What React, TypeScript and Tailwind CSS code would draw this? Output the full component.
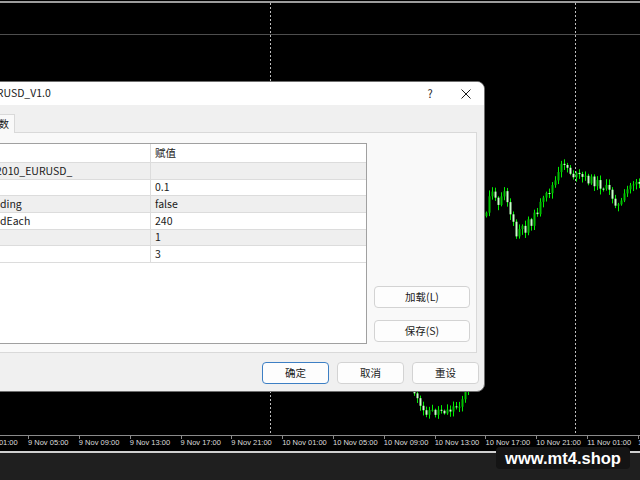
import React from 'react';

type Pt = [number, number];

// rough shape of the price line, in chart pixels (y grows downward)
const PRICE_PATH: Pt[] = [
  [414, 392], [418, 405], [422, 412], [428, 410], [434, 413], [440, 409], [446, 411],
  [452, 408], [458, 405], [462, 398], [466, 392], [470, 378], [476, 300], [483, 220],
  [486, 212], [489, 198], [492, 190], [496, 205], [500, 196], [504, 188], [508, 205],
  [512, 222], [516, 236], [520, 228], [524, 232], [528, 220], [532, 222], [536, 212],
  [540, 205], [544, 200], [548, 192], [552, 186], [556, 180], [560, 170], [563, 160],
  [566, 166], [570, 172], [574, 176], [580, 177], [586, 179], [592, 181], [598, 184],
  [604, 187], [610, 193], [614, 200], [618, 206], [622, 202], [626, 192], [630, 186],
  [635, 180], [641, 184],
];

function priceAt(x: number): number {
  for (let i = 0; i < PRICE_PATH.length - 1; i++) {
    const [x0, y0] = PRICE_PATH[i];
    const [x1, y1] = PRICE_PATH[i + 1];
    if (x >= x0 && x <= x1) return y0 + ((y1 - y0) * (x - x0)) / (x1 - x0);
  }
  return PRICE_PATH[PRICE_PATH.length - 1][1];
}

type Candle = { x: number; open: number; close: number; high: number; low: number };

function buildCandles(): Candle[] {
  let seed = 11;
  const rnd = () => {
    seed = (seed * 9301 + 49297) % 233280;
    return seed / 233280;
  };
  const out: Candle[] = [];
  let prev = priceAt(414);
  for (let x = 414; x <= 641; x += 3) {
    const close = priceAt(x) + (rnd() - 0.5) * 9;
    const open = prev;
    const high = Math.min(open, close) - 1 - rnd() * 5;
    const low = Math.max(open, close) + 1 + rnd() * 5;
    out.push({ x, open, close, high, low });
    prev = close;
  }
  return out;
}

const CANDLES = buildCandles();

const TIME_LABELS = [
  '9 Nov 01:00', '9 Nov 05:00', '9 Nov 09:00', '9 Nov 13:00', '9 Nov 17:00', '9 Nov 21:00',
  '10 Nov 01:00', '10 Nov 05:00', '10 Nov 09:00', '10 Nov 13:00', '10 Nov 17:00', '10 Nov 21:00',
  '11 Nov 01:00', '11 Nov 05:00',
];

const ROWS = [
  { name: '2010_EURUSD_', value: '', gray: true, cut: true },
  { name: '', value: '0.1', gray: false },
  { name: 'ding', value: 'false', gray: true },
  { name: 'dEach', value: '240', gray: false },
  { name: '', value: '1', gray: true },
  { name: '', value: '3', gray: false },
];

function ChartCanvas() {
  return (
    <svg className="absolute inset-0" width={640} height={435} viewBox="0 0 640 435">
      <line x1={270.5} y1={3} x2={270.5} y2={435} stroke="#bdbdbd" strokeDasharray="2 2" />
      <line x1={575.5} y1={3} x2={575.5} y2={435} stroke="#bdbdbd" strokeDasharray="2 2" />
      {CANDLES.map((c) => {
        const top = Math.min(c.open, c.close);
        const h = Math.max(1, Math.abs(c.close - c.open));
        const bull = c.close < c.open;
        return (
          <g key={c.x}>
            <line x1={c.x + 0.5} x2={c.x + 0.5} y1={c.high} y2={c.low} stroke="#00f000" />
            <rect x={c.x - 0.5} y={top} width={2} height={h} fill={bull ? '#00c000' : '#c8ffc8'} />
          </g>
        );
      })}
    </svg>
  );
}

function WinButton({ label, wide, primary }: { label: string; wide?: boolean; primary?: boolean }) {
  return (
    <button
      type="button"
      className={`flex h-[22px] items-center justify-center rounded-[4px] border bg-[#fdfdfd] text-[10.5px] leading-none text-[#1b1b1b] ${
        wide ? 'w-[96px]' : 'w-[67px]'
      } ${primary ? 'border-[#3d7fc4]' : 'border-[#d3d3d3]'}`}
    >
      {label}
    </button>
  );
}

function ParamsDialog() {
  return (
    <div className="absolute left-[-12px] top-[81px] flex h-[311px] w-[497px] flex-col overflow-hidden rounded-lg border border-[#6e6e6e] bg-[#f0f0f0] font-['Noto_Sans_CJK_SC',sans-serif] text-[10.5px] text-[#1a1a1a]">
      {/* title bar */}
      <div className="flex h-[23px] shrink-0 items-center bg-white">
        <span className="-ml-[6px] leading-none">EURUSD_V1.0</span>
        <div className="ml-auto flex h-full">
          <span className="flex w-[36px] items-center justify-center text-[11px] leading-none">?</span>
          <span className="flex w-[36px] items-center justify-center">
            <svg width="10" height="10" viewBox="0 0 10 10">
              <path d="M0.5 0.5 9.5 9.5M9.5 0.5 0.5 9.5" stroke="#1a1a1a" strokeWidth="1" />
            </svg>
          </span>
        </div>
      </div>

      {/* tab strip */}
      <div className="flex h-[27px] shrink-0 items-end pt-[8px]">
        <div className="relative z-10 -mb-px -ml-[7px] h-[19px] border border-b-0 border-[#d9d9d9] bg-[#f9f9f9] px-[5px] leading-[18px]">
          参数
        </div>
      </div>

      {/* tab panel */}
      <div className="mr-[7px] flex min-h-0 flex-1 gap-[7px] border border-[#d9d9d9] bg-[#f9f9f9] pb-[8px] pl-[4px] pr-[6px] pt-[10px]">
        <div className="flex flex-1 flex-col border border-[#a0a0a0] bg-white">
          <div className="flex h-[19px] shrink-0 border-b border-[#dcdcdc]">
            <div className="w-[156px] shrink-0 border-r border-[#dcdcdc]" />
            <div className="flex flex-1 items-center pl-[4px] leading-none">赋值</div>
          </div>
          {ROWS.map((r, i) => (
            <div
              key={i}
              className={`flex h-[16.67px] shrink-0 border-b border-[#dcdcdc] leading-none ${r.gray ? 'bg-[#efefef]' : 'bg-white'}`}
            >
              <div className="flex w-[156px] shrink-0 items-center overflow-hidden border-r border-[#dcdcdc] pl-[5px]">
                <span className={r.cut ? '-ml-[4px] whitespace-nowrap' : 'whitespace-nowrap'}>{r.name}</span>
              </div>
              <div className="flex flex-1 items-center pl-[4px]">{r.value}</div>
            </div>
          ))}
        </div>
        <div className="flex flex-col justify-end gap-[12px] pb-[2px]">
          <WinButton label="加载(L)" wide />
          <WinButton label="保存(S)" wide />
        </div>
      </div>

      {/* dialog buttons */}
      <div className="flex h-[38px] shrink-0 justify-end gap-[8px] pr-[5px] pt-[9px]">
        <WinButton label="确定" primary />
        <WinButton label="取消" />
        <WinButton label="重设" />
      </div>
    </div>
  );
}

export default function App() {
  return (
    <div className="relative h-[480px] w-[640px] overflow-hidden bg-black font-['Liberation_Sans',sans-serif]">
      <div className="flex h-full flex-col">
        <div className="relative h-[435px] shrink-0">
          <div className="mt-px h-[2px] bg-[#9c9c9c]" />
          <div className="mt-[31px] h-px bg-[#4e4e4e]" />
          <ChartCanvas />
        </div>
        <div className="h-px shrink-0 bg-[#8a8a8a]" />
        <div className="-ml-[22.8px] flex h-[15px] shrink-0">
          {TIME_LABELS.map((t) => (
            <div key={t} className="flex w-[50.83px] shrink-0 flex-col">
              <div className="h-[3px] w-px bg-[#8a8a8a]" />
              <span className="whitespace-nowrap text-[7.5px] leading-[8px] text-[#dedede]">{t}</span>
            </div>
          ))}
        </div>
        <div className="h-[2px] shrink-0 bg-[#cfcfcf]" />
        <div className="flex-1 bg-[#1f1f1f]" />
      </div>

      <ParamsDialog />

      <div className="absolute left-[496px] top-[447px] flex h-[22px] w-[134px] items-center justify-center rounded-sm bg-[#141414] text-[16.5px] font-bold leading-none text-white">
        www.mt4.shop
      </div>
    </div>
  );
}
